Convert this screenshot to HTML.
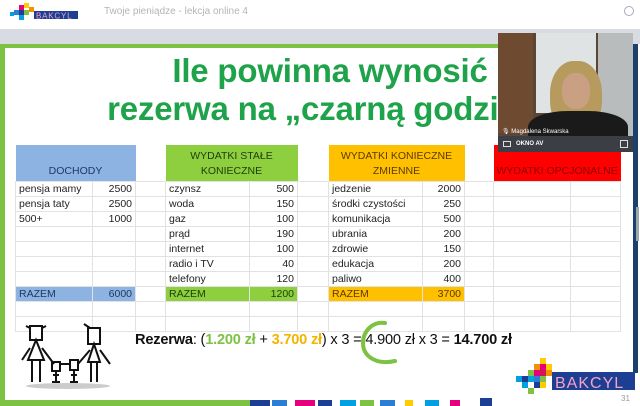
<!DOCTYPE html>
<html><head><meta charset="utf-8">
<style>
*{margin:0;padding:0;box-sizing:border-box}
body{width:640px;height:406px;overflow:hidden;background:#fff;font-family:"Liberation Sans",sans-serif;position:relative}
.abs{position:absolute}
.top{left:0;top:0;width:640px;height:29px;background:#fff}
.gray{left:0;top:29px;width:640px;height:15px;background:#d9dbe3}
.slide{left:0;top:44px;width:633px;height:362px;background:#fff;border-left:5px solid #7dc242;border-top:4px solid #7dc242}
.title{left:0;width:660px;text-align:center;color:#1ea34a;font-weight:bold;font-size:33px;letter-spacing:-0.2px}
table{position:absolute;left:15px;top:145px;border-collapse:collapse;font-size:10.5px;color:#222;table-layout:fixed}
td{border:1px solid #e2e2e2;height:15.1px;padding:0 3px;white-space:nowrap;overflow:hidden}
td.n{text-align:right}
.hd td{height:36px;text-align:center;vertical-align:bottom;padding-bottom:2px;line-height:15px;border:none}
.b{background:#8db3e2;color:#1f3864}
.g{background:#8dcf3f;color:#1f3d0c}
.o{background:#ffc000;color:#5a3a00}
.r{background:#ff0000;color:#8b0000}
.vid{left:498px;top:33px;width:135px;height:119px;background:#5a4636;overflow:hidden}
</style></head><body>
<div class="abs top"></div>
<svg class="abs" style="left:8px;top:2px" width="72" height="20">
<rect x="6" y="8" width="5" height="5" fill="#2a7fd4"/><rect x="11" y="3" width="5" height="5" fill="#e6007e"/><rect x="16" y="1" width="5" height="5" fill="#ffcc00"/><rect x="11" y="8" width="5" height="5" fill="#1c3f94"/><rect x="16" y="8" width="5" height="5" fill="#7dc242"/><rect x="21" y="5" width="5" height="5" fill="#f39200"/><rect x="11" y="13" width="5" height="5" fill="#00a0e3"/><rect x="2" y="10" width="4" height="4" fill="#00a0e3"/>
<rect x="26" y="9" width="44" height="8" fill="#1c3f94"/>
<text x="28" y="16.5" font-size="8" fill="#f7a1c4" font-family="Liberation Sans" letter-spacing="0.8">BAKCYL</text></svg>
<div class="abs" style="left:104px;top:6px;font-size:10px;color:#b5b5b5">Twoje pieniądze - lekcja online 4</div>
<div class="abs" style="left:624px;top:6px;width:10px;height:10px;border:1px solid #aab;border-radius:50%"></div>
<div class="abs gray"></div>
<div class="abs slide"></div>
<div class="abs" style="left:633px;top:44px;width:5px;height:329px;background:#1c3f6e"></div>
<div class="abs" style="left:636px;top:207px;width:3px;height:34px;background:#9aa"></div>
<div class="abs title" style="top:52px">Ile powinna wynosić</div>
<div class="abs title" style="top:90px">rezerwa na „czarną godzinę”</div>

<table>
<colgroup><col style="width:77px"><col style="width:43px"><col style="width:30px"><col style="width:84px"><col style="width:48px"><col style="width:31px"><col style="width:94px"><col style="width:42px"><col style="width:29px"><col style="width:75px"><col style="width:49px"></colgroup>
<tr class="hd"><td colspan="2" class="b">DOCHODY</td><td></td><td colspan="2" class="g">WYDATKI STAŁE<br>KONIECZNE</td><td></td><td colspan="2" class="o">WYDATKI KONIECZNE<br>ZMIENNE</td><td></td><td colspan="2" class="r">WYDATKI OPCJONALNE</td></tr>
<tr><td>pensja mamy</td><td class="n">2500</td><td></td><td>czynsz</td><td class="n">500</td><td></td><td>jedzenie</td><td class="n">2000</td><td></td><td></td><td></td></tr>
<tr><td>pensja taty</td><td class="n">2500</td><td></td><td>woda</td><td class="n">150</td><td></td><td>środki czystości</td><td class="n">250</td><td></td><td></td><td></td></tr>
<tr><td>500+</td><td class="n">1000</td><td></td><td>gaz</td><td class="n">100</td><td></td><td>komunikacja</td><td class="n">500</td><td></td><td></td><td></td></tr>
<tr><td></td><td></td><td></td><td>prąd</td><td class="n">190</td><td></td><td>ubrania</td><td class="n">200</td><td></td><td></td><td></td></tr>
<tr><td></td><td></td><td></td><td>internet</td><td class="n">100</td><td></td><td>zdrowie</td><td class="n">150</td><td></td><td></td><td></td></tr>
<tr><td></td><td></td><td></td><td>radio i TV</td><td class="n">40</td><td></td><td>edukacja</td><td class="n">200</td><td></td><td></td><td></td></tr>
<tr><td></td><td></td><td></td><td>telefony</td><td class="n">120</td><td></td><td>paliwo</td><td class="n">400</td><td></td><td></td><td></td></tr>
<tr><td class="b">RAZEM</td><td class="b n">6000</td><td></td><td class="g">RAZEM</td><td class="g n">1200</td><td></td><td class="o">RAZEM</td><td class="o n">3700</td><td></td><td></td><td></td></tr>
<tr><td></td><td></td><td></td><td></td><td></td><td></td><td></td><td></td><td></td><td></td><td></td></tr>
<tr><td></td><td></td><td></td><td></td><td></td><td></td><td></td><td></td><td></td><td></td><td></td></tr>
</table>

<div class="abs" style="left:135px;top:332px;font-size:14.6px;color:#111;white-space:nowrap;letter-spacing:-0.2px"><b>Rezerwa</b>: (<b style="color:#7dc242">1.200 zł</b> + <b style="color:#f4b400">3.700 zł</b>) x 3 = 4.900 zł x 3 = <b>14.700 zł</b></div>
<svg class="abs" style="left:355px;top:315px" width="60" height="55"><path d="M30 8 C18 6 8 16 8 28 C8 42 22 50 40 46" fill="none" stroke="#7dc242" stroke-width="4" stroke-linecap="round"/></svg>

<svg class="abs" style="left:18px;top:320px" width="100" height="72" fill="none" stroke="#111" stroke-width="2">
<ellipse cx="50" cy="66" rx="42" ry="3" fill="#ccc" stroke="none"/>
<rect x="12" y="6" width="12" height="14" fill="#fff"/><path d="M18 20 L10 40 L26 40 Z M14 40 V62 M22 40 V62 M12 28 L4 40 M24 28 L36 44 M8 6 L12 8 M24 8 L28 6"/>
<rect x="34" y="42" width="8" height="9"/><path d="M38 51 V62 M35 55 H41 M34 62 H42"/>
<rect x="52" y="40" width="8" height="10"/><path d="M56 50 V62 M53 55 H59 M52 62 H60 M42 44 H52"/>
<rect x="70" y="8" width="12" height="16" fill="#fff"/><path d="M76 24 L70 42 H82 Z M73 42 V62 M79 42 V62 M72 30 L60 44 M82 30 L92 44 M66 4 L72 8"/>
</svg>

<svg class="abs" style="left:510px;top:358px" width="125" height="40">
<rect x="30" y="0" width="6" height="6" fill="#ffcc00"/><rect x="24" y="6" width="6" height="6" fill="#f39200"/><rect x="30" y="6" width="6" height="6" fill="#e6007e"/><rect x="36" y="6" width="6" height="6" fill="#ffcc00"/><rect x="18" y="12" width="6" height="6" fill="#7dc242"/><rect x="24" y="12" width="6" height="6" fill="#e6007e"/><rect x="30" y="12" width="6" height="6" fill="#d4145a"/><rect x="36" y="12" width="6" height="6" fill="#f39200"/><rect x="6" y="18" width="6" height="6" fill="#00a0e3"/><rect x="12" y="18" width="6" height="6" fill="#1c3f94"/><rect x="18" y="18" width="6" height="6" fill="#00a0e3"/><rect x="24" y="18" width="6" height="6" fill="#2a7fd4"/><rect x="30" y="18" width="6" height="6" fill="#7dc242"/><rect x="12" y="24" width="6" height="6" fill="#00a0e3"/><rect x="24" y="24" width="6" height="6" fill="#1c3f94"/><rect x="30" y="24" width="6" height="6" fill="#ffcc00"/><rect x="18" y="30" width="6" height="6" fill="#7dc242"/>
<rect x="42" y="14" width="83" height="18" fill="#1c3f94"/>
<text x="45" y="30" font-size="16" fill="#f7a1c4" font-family="Liberation Sans" letter-spacing="1">BAKCYL</text></svg>
<div class="abs" style="left:621px;top:394px;font-size:8px;color:#999">31</div>
<div class="abs" style="left:0;top:400px;width:250px;height:6px;background:#7dc242"></div>
<svg class="abs" style="left:250px;top:398px" width="250" height="8">
<rect x="0" y="2" width="20" height="6" fill="#1c3f94"/><rect x="22" y="2" width="15" height="6" fill="#2a7fd4"/><rect x="45" y="2" width="20" height="6" fill="#e6007e"/><rect x="68" y="2" width="14" height="6" fill="#1c3f94"/><rect x="90" y="2" width="16" height="6" fill="#00a0e3"/><rect x="110" y="2" width="14" height="6" fill="#7dc242"/><rect x="130" y="2" width="15" height="6" fill="#2a7fd4"/><rect x="155" y="2" width="8" height="6" fill="#ffcc00"/><rect x="175" y="2" width="14" height="6" fill="#00a0e3"/><rect x="200" y="2" width="10" height="6" fill="#e6007e"/><rect x="230" y="0" width="12" height="8" fill="#1c3f94"/></svg>

<div class="abs vid">
<div class="abs" style="left:0;top:0;width:35px;height:100px;background:#6e4a30"></div>
<div class="abs" style="left:38px;top:0;width:60px;height:80px;background:#dfe3e4"></div>
<div class="abs" style="left:100px;top:0;width:35px;height:110px;background:#b8bcbd"></div>
<div class="abs" style="left:52px;top:28px;width:52px;height:72px;background:#b79a5e;border-radius:45%"></div>
<div class="abs" style="left:64px;top:40px;width:28px;height:36px;background:#c9a182;border-radius:45%"></div>
<div class="abs" style="left:30px;top:78px;width:100px;height:40px;background:#1a1a1a;border-radius:40% 40% 0 0"></div>
<div class="abs" style="left:0;top:94px;width:135px;height:10px;font-size:6px;color:#fff;padding-left:4px;line-height:10px">🎙 Magdalena Skwarska</div>
<div class="abs" style="left:0;top:103px;width:135px;height:16px;background:#3b3e45;font-size:6px;color:#fff;font-weight:bold;padding-left:18px;line-height:16px">OKNO AV</div>
<div class="abs" style="left:5px;top:108px;width:8px;height:6px;border:1px solid #ddd"></div>
<div class="abs" style="left:122px;top:107px;width:8px;height:8px;border:1px solid #ddd"></div>
</div>
</body></html>
